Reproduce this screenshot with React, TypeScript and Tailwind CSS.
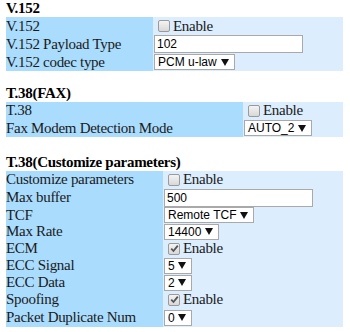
import React from "react"

type Row =
  | { label: string; kind: "check"; checked?: boolean; h: number }
  | { label: string; kind: "input"; value: string; w: number; h: number }
  | { label: string; kind: "select"; value: string; w: number; h: number }

const LABEL_BG = "bg-[#aadcfe]"
const VALUE_BG = "bg-[#dcedfd]"

function CheckBox({ checked }: { checked?: boolean }) {
  return (
    <span className="ml-[4px] inline-flex h-[12px] w-[12px] shrink-0 items-center justify-center rounded-[2px] border border-[#9a9a9a] bg-gradient-to-b from-[#f4f4f4] to-[#d8d8d8]">
      {checked && (
        <svg width="9" height="9" viewBox="0 0 9 9">
          <path d="M1.2 4.6 L3.5 7 L7.8 1.6" fill="none" stroke="#555" strokeWidth="1.8" />
        </svg>
      )}
    </span>
  )
}

function Select({ value, w }: { value: string; w: number }) {
  return (
    <span
      className="flex h-[16px] shrink-0 items-center justify-between whitespace-nowrap border border-[#a9a9a9] bg-white pl-[3px] pr-[5px] font-['Liberation_Sans',Arial,sans-serif] text-[12px] leading-none text-black"
      style={{ width: w }}
    >
      <span>{value}</span>
      <svg width="8" height="7" viewBox="0 0 8 7" className="shrink-0">
        <path d="M0 0 H8 L4 7 Z" fill="#111" />
      </svg>
    </span>
  )
}

function Section({ title, labelW, rows, className }: { title: string; labelW: number; rows: Row[]; className?: string }) {
  return (
    <div className={className}>
      <div className="flex h-[17px] items-center whitespace-nowrap px-[6px] text-[15px] font-bold leading-none tracking-[-0.3px] text-black">
        {title}
      </div>
      <div className="mx-[6px] w-[337px]">
        {rows.map((r) => (
          <div key={r.label} className="flex" style={{ height: r.h }}>
            <div
              className={`${LABEL_BG} flex items-center whitespace-nowrap text-[15px] leading-none tracking-[-0.3px] text-[#1a1a1a]`}
              style={{ width: labelW }}
            >
              {r.label}
            </div>
            <div className={`${VALUE_BG} flex flex-1 items-center pl-[1px]`}>
              {r.kind === "check" && (
                <>
                  <CheckBox checked={r.checked} />
                  <span className="ml-[3px] text-[15px] leading-none tracking-[-0.3px] text-[#1a1a1a]">Enable</span>
                </>
              )}
              {r.kind === "input" && (
                <span
                  className="flex h-[18px] shrink-0 items-center border border-[#a9a9a9] bg-white pl-[2px] font-['Liberation_Sans',Arial,sans-serif] text-[12px] leading-none text-black"
                  style={{ width: r.w }}
                >
                  {r.value}
                </span>
              )}
              {r.kind === "select" && <Select value={r.value} w={r.w} />}
            </div>
          </div>
        ))}
      </div>
    </div>
  )
}

export default function App() {
  return (
    <div className="h-[332px] w-[350px] overflow-hidden bg-white font-['Liberation_Serif','Times_New_Roman',serif]">
      <Section
        title="V.152"
        labelW={147}
        rows={[
          { label: "V.152", kind: "check", h: 18 },
          { label: "V.152 Payload Type", kind: "input", value: "102", w: 149, h: 18 },
          { label: "V.152 codec type", kind: "select", value: "PCM u-law", w: 81, h: 18 },
        ]}
      />
      <Section
        className="mt-[14px]"
        title="T.38(FAX)"
        labelW={237}
        rows={[
          { label: "T.38", kind: "check", h: 17 },
          { label: "Fax Modem Detection Mode", kind: "select", value: "AUTO_2", w: 68, h: 18 },
        ]}
      />
      <Section
        className="mt-[17px]"
        title="T.38(Customize parameters)"
        labelW={157}
        rows={[
          { label: "Customize parameters", kind: "check", h: 17 },
          { label: "Max buffer", kind: "input", value: "500", w: 149, h: 19 },
          { label: "TCF", kind: "select", value: "Remote TCF", w: 90, h: 16 },
          { label: "Max Rate", kind: "select", value: "14400", w: 55, h: 17 },
          { label: "ECM", kind: "check", checked: true, h: 17 },
          { label: "ECC Signal", kind: "select", value: "5", w: 28, h: 17 },
          { label: "ECC Data", kind: "select", value: "2", w: 28, h: 17 },
          { label: "Spoofing", kind: "check", checked: true, h: 17 },
          { label: "Packet Duplicate Num", kind: "select", value: "0", w: 28, h: 19 },
        ]}
      />
    </div>
  )
}
